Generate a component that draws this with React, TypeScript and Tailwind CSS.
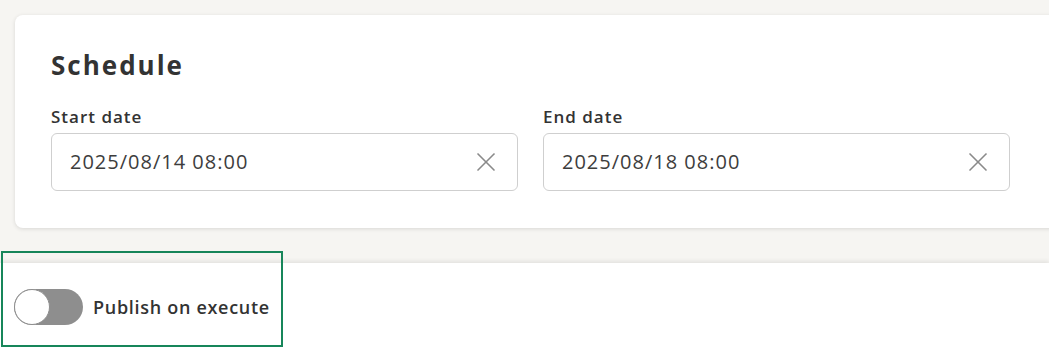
import { X } from "lucide-react";

function DateField({ label, value }: { label: string; value: string }) {
  return (
    <div>
      <p className="text-[17px] font-semibold tracking-[1px] text-[#333] leading-5 mb-[6px]">{label}</p>
      <div className="h-[58px] flex items-center justify-between border border-[#cfcfcf] rounded-[6px] pl-[18px] pr-[15px] bg-white">
        <span className="text-[20px] tracking-[1px] text-[#3d3d3d]">{value}</span>
        <X size={32} strokeWidth={1.25} className="text-[#8a8a8a]" />
      </div>
    </div>
  );
}

export default function App() {
  return (
    <div
      className="relative w-[1049px] h-[347px] overflow-hidden bg-[#f6f5f2]"
      style={{ fontFamily: '"Open Sans", "Noto Sans", sans-serif' }}
    >
      {/* Schedule card */}
      <div className="pt-[15px] pl-[15px]">
        <div className="w-[1060px] h-[213px] bg-white rounded-[8px] shadow-[0_1px_4px_rgba(0,0,0,0.12)] pl-[36px] pt-[32px]">
          <h2 className="text-[26px] font-bold tracking-[2px] text-[#333] leading-9 mb-[24px]">Schedule</h2>
          <div className="grid grid-cols-[467px_467px] gap-[25px]">
            <DateField label="Start date" value="2025/08/14 08:00" />
            <DateField label="End date" value="2025/08/18 08:00" />
          </div>
        </div>
      </div>

      {/* Bottom bar */}
      <div className="absolute left-0 right-0 top-[263px] bottom-0 bg-white shadow-[0_-2px_4px_rgba(0,0,0,0.08)] flex items-start pl-[14px] pt-[26px]">
        <div className="flex items-center gap-[10px]">
          <div className="relative w-[69px] h-[36px] rounded-full bg-[#8e8e8e]">
            <div className="absolute left-0 top-0 w-[36px] h-[36px] rounded-full bg-white border border-[#8e8e8e]" />
          </div>
          <span className="text-[18px] font-semibold tracking-[0.7px] text-[#333]">Publish on execute</span>
        </div>
      </div>

      {/* Highlight outline */}
      <div className="absolute left-[1px] top-[251px] w-[282px] h-[96px] border-2 border-[#17865a]" />
    </div>
  );
}
